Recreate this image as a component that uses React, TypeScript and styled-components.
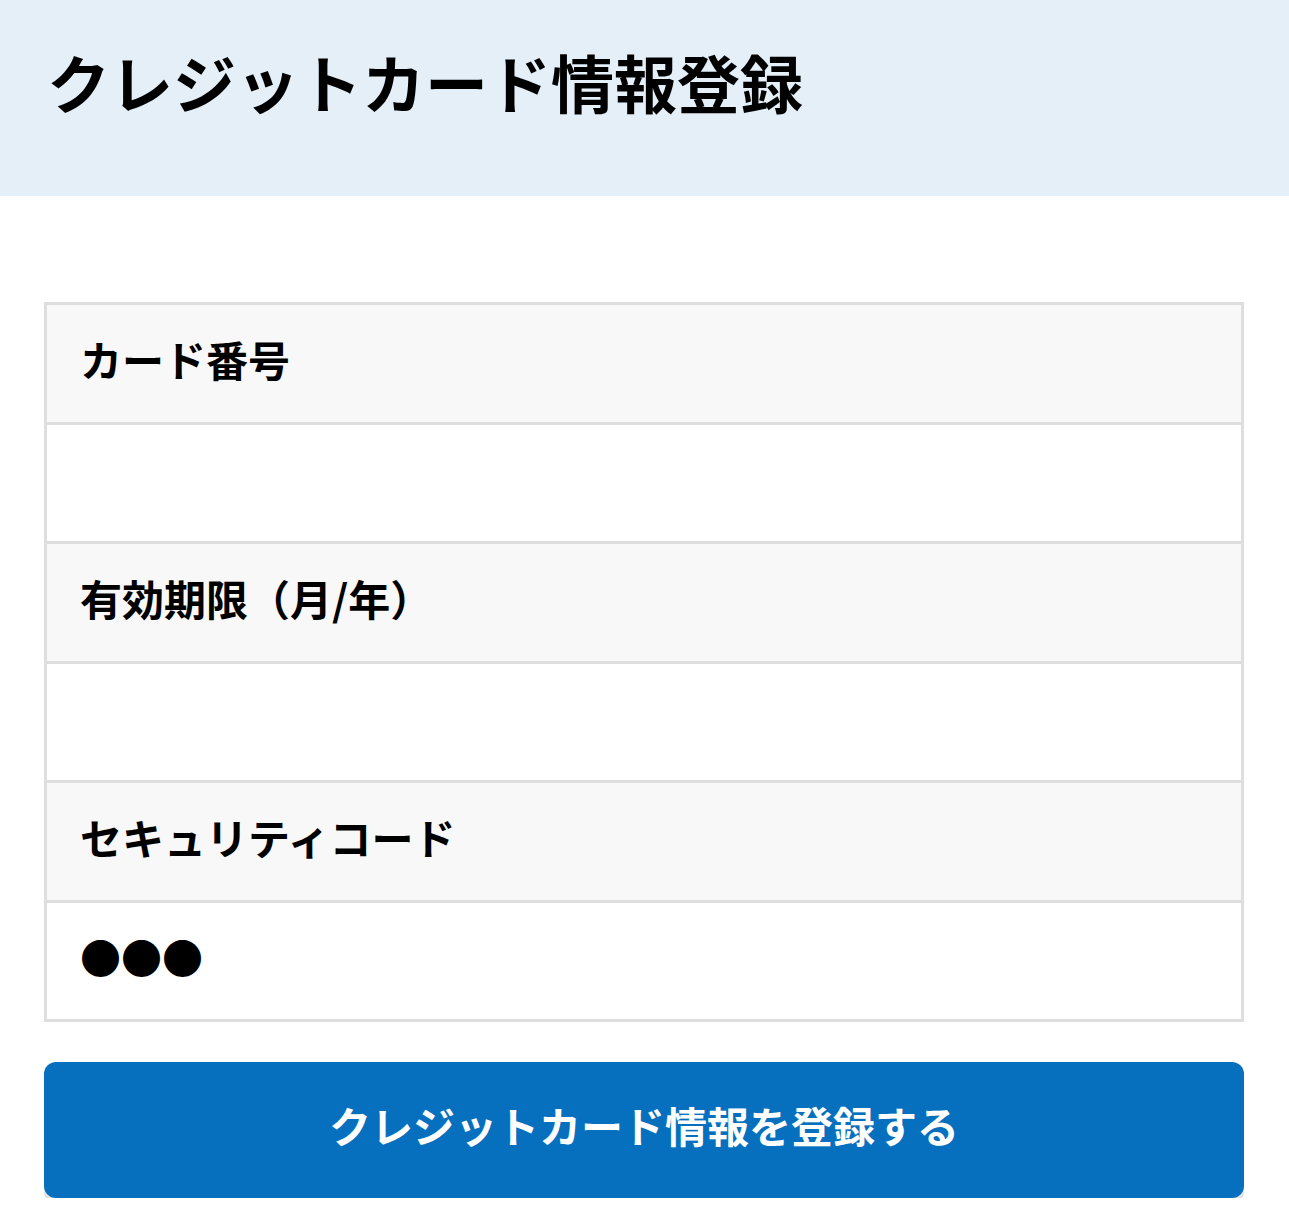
import React from "react";
import styled, { createGlobalStyle } from "styled-components";

const GlobalStyle = createGlobalStyle`
  html, body { margin: 0; padding: 0; background: #ffffff; }
  body {
    font-family: "Noto Sans CJK JP", "Noto Sans", "Liberation Sans", sans-serif;
    color: #000;
  }
`;

const Page = styled.div`
  width: 1289px;
  display: flex;
  flex-direction: column;
`;

const Header = styled.header`
  height: 196px;
  box-sizing: border-box;
  background: #e4eff8;
  padding: 41px 0 0 47px;
`;

const Title = styled.h1`
  margin: 0;
  font-size: 63px;
  line-height: 80px;
  font-weight: 700;
  letter-spacing: 0;
`;

const Main = styled.main`
  padding: 106px 45px 0 44px;
  display: flex;
  flex-direction: column;
  gap: 40px;
`;

const Table = styled.div`
  border: 3px solid #dedede;
  display: flex;
  flex-direction: column;
`;

const Row = styled.div<{ $head?: boolean }>`
  height: 116.5px;
  box-sizing: content-box;
  display: flex;
  align-items: center;
  padding: 0 0 0 33px;
  background: ${(p) => (p.$head ? "#f8f8f8" : "#ffffff")};
  border-bottom: 3px solid #dedede;
  font-size: 42px;
  line-height: 1;
  font-weight: ${(p) => (p.$head ? 700 : 400)};
  &:last-child { border-bottom: none; }
`;

const Label = styled.span`
  display: block;
  margin-top: -8px;
`;

const Dots = styled.span`
  display: block;
  margin-top: -8px;
  font-size: 41px;
  letter-spacing: 0;
  font-family: "Noto Sans CJK JP", sans-serif;
`;

const Button = styled.button`
  height: 136px;
  border: none;
  border-radius: 12px;
  background: #0670be;
  color: #ffffff;
  font-family: "Noto Sans CJK JP", "Noto Sans", sans-serif;
  font-size: 42px;
  line-height: 1;
  font-weight: 700;
  box-shadow: 0 6px 0 #e2e2e2;
  cursor: pointer;
  padding: 0 0 10px;
`;

export default function App() {
  return (
    <>
      <GlobalStyle />
      <Page>
        <Header>
          <Title>クレジットカード情報登録</Title>
        </Header>
        <Main>
          <Table>
            <Row $head><Label>カード番号</Label></Row>
            <Row></Row>
            <Row $head><Label>有効期限（月/年）</Label></Row>
            <Row></Row>
            <Row $head><Label>セキュリティコード</Label></Row>
            <Row>
              <Dots>●●●</Dots>
            </Row>
          </Table>
          <Button>クレジットカード情報を登録する</Button>
        </Main>
      </Page>
    </>
  );
}
